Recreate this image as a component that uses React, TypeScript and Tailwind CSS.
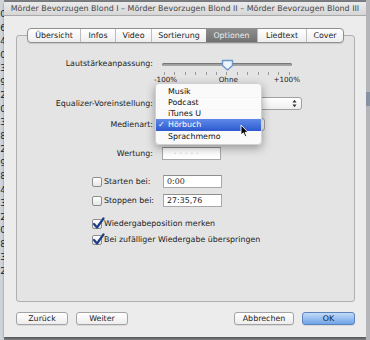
import React from "react";

const TABS = [
  { label: "Übersicht", w: "w-[52px]" },
  { label: "Infos", w: "w-[35px]" },
  { label: "Video", w: "w-[36px]" },
  { label: "Sortierung", w: "w-[55px]" },
  { label: "Optionen", w: "w-[51px]", active: true },
  { label: "Liedtext", w: "w-[49px]" },
  { label: "Cover", w: "w-[37px]" },
];

const MENU = ["Musik", "Podcast", "iTunes U", "Hörbuch", "Sprachmemo"];

const STRIP = ["0", "6", "4", "0", "3", "9", "2", "0", "3", "8", "2", "9", "8", "4", "3", "2", "0", "8", "3", "2"];

function Checkbox({ checked }: { checked?: boolean }) {
  return (
    <div className="relative w-[10px] h-[10px] shrink-0 rounded-[2px] border border-[#8d8d8d] bg-gradient-to-b from-white to-[#e6e6e6]">
      {checked && (
        <svg className="absolute -top-[3px] -left-[1px]" width="13" height="13" viewBox="0 0 13 13">
          <path d="M2 7 L5 10.5 L11.5 1.5" fill="none" stroke="#1d3f86" strokeWidth="2.2" strokeLinecap="round" strokeLinejoin="round" />
        </svg>
      )}
    </div>
  );
}

function Field({ value, children }: { value?: string; children?: React.ReactNode }) {
  return (
    <div className="w-[59px] h-[13px] bg-white border border-[#a8a8a8] border-t-[#8f8f8f] flex items-center pl-[3px] text-[#1a1a1a]">
      {value}
      {children}
    </div>
  );
}

function Button({ label, primary, w }: { label: string; primary?: boolean; w: string }) {
  return (
    <div
      className={`${w} h-[13px] rounded-[3px] border flex items-center justify-center ${
        primary
          ? "border-[#5b84bd] bg-gradient-to-b from-[#c3dbf7] to-[#6fa3e6] text-[#0e1f3a]"
          : "border-[#a3a3a3] bg-gradient-to-b from-white to-[#ededed] text-[#1e1e1e]"
      } shadow-[0_1px_0_rgba(0,0,0,0.08)]`}
    >
      {label}
    </div>
  );
}

export default function App() {
  const ticks = Array.from({ length: 13 });
  return (
    <div className="relative w-[370px] h-[340px] overflow-hidden bg-[#7c7d80] flex font-['DejaVu_Sans',sans-serif] text-[7.9px] leading-none text-[#222]">
      {/* left strip of the window behind */}
      <div className="w-[4px] h-full bg-[#cfd4da] overflow-hidden flex flex-col items-end pt-[10px]">
        {STRIP.map((d, i) => (
          <div key={i} className="h-[13.5px] text-[9px] text-[#1c1c1c] -mr-[2px]">
            {d}
          </div>
        ))}
      </div>

      {/* dialog window */}
      <div className="w-[362px] h-[335px] mt-[2px] bg-[#ececec] flex flex-col shadow-[0_1px_2px_rgba(0,0,0,0.4)]">
        <div className="h-[14px] shrink-0 bg-gradient-to-b from-[#ebebeb] to-[#d6d6d6] border-b border-[#a9a9a9] flex items-center justify-center text-[#474747] text-[7.95px] whitespace-nowrap">
          Mörder Bevorzugen Blond I – Mörder Bevorzugen Blond II – Mörder Bevorzugen Blond III
        </div>

        <div className="flex flex-col pl-[12px] pr-[11px] pt-[12px]">
          {/* tabs */}
          <div className="relative z-10 self-center flex h-[15px] rounded-[4px] border border-[#8f8f8f] bg-gradient-to-b from-white to-[#eeeeee] overflow-hidden shadow-[0_1px_1px_rgba(0,0,0,0.12)]">
            {TABS.map((t, i) => (
              <div
                key={t.label}
                className={`${t.w} flex items-center justify-center ${
                  t.active
                    ? "bg-gradient-to-b from-[#8e8e8e] to-[#727272] text-[#ececec]"
                    : i > 0
                    ? "border-l border-[#bdbdbd] text-[#1f1f1f]"
                    : "text-[#1f1f1f]"
                }`}
              >
                {t.label}
              </div>
            ))}
          </div>

          {/* group box */}
          <div className="-mt-[8px] h-[267px] border border-[#b0b0b0] rounded-[3px] bg-[#e4e4e4] flex flex-col pt-[20px]">
            {/* volume slider */}
            <div className="flex items-start">
              <div className="w-[136px] h-[16px] flex items-center justify-end">Lautstärkeanpassung:</div>
              <div className="ml-[9px] flex flex-col w-[130px]">
                <div className="relative h-[16px] flex items-center">
                  <div className="w-full h-[3px] rounded-full bg-[#a4a4a4] shadow-[inset_0_1px_1px_rgba(0,0,0,0.3)]" />
                  <svg className="absolute left-[59px] top-[3px]" width="13" height="12" viewBox="0 0 13 12">
                    <path d="M1.5 1.5 H11.5 V6.5 L6.5 11 L1.5 6.5 Z" fill="#eef4fb" stroke="#6c97c9" strokeWidth="1.4" strokeLinejoin="round" />
                  </svg>
                </div>
                <div className="h-[3px] flex justify-between px-[2px]">
                  {ticks.map((_, i) => (
                    <div key={i} className="w-px h-[3px] bg-[#9a9a9a]" />
                  ))}
                </div>
                <div className="h-[9px] flex items-center justify-between text-[7.2px] -mx-[8px]">
                  <span>-100%</span>
                  <span className="ml-[6px]">Ohne</span>
                  <span>+100%</span>
                </div>
              </div>
            </div>

            {/* equalizer */}
            <div className="mt-[13px] h-[13px] flex items-center">
              <div className="w-[136px] text-right">Equalizer-Voreinstellung:</div>
              <div className="ml-[6px] w-[143px] h-[13px] rounded-[3px] border border-[#a0a0a0] bg-gradient-to-b from-white to-[#efefef] flex items-center justify-end pr-[4px]">
                <svg width="5" height="9" viewBox="0 0 5 9">
                  <path d="M0.5 3.5 L2.5 0.8 L4.5 3.5 Z M0.5 5.5 L2.5 8.2 L4.5 5.5 Z" fill="#333" />
                </svg>
              </div>
            </div>

            {/* medienart */}
            <div className="mt-[8px] h-[13px] flex items-center">
              <div className="w-[136px] text-right">Medienart:</div>
              <div className="ml-[6px] w-[106px] h-[13px] rounded-[3px] border border-[#a0a0a0] bg-gradient-to-b from-white to-[#efefef]" />
            </div>

            {/* wertung */}
            <div className="mt-[16px] h-[13px] flex items-center">
              <div className="w-[136px] text-right">Wertung:</div>
              <div className="ml-[9px]">
                <Field>
                  <span className="text-[#b5b5b5] tracking-[3px] pl-[8px]">·····</span>
                </Field>
              </div>
            </div>

            {/* start / stop */}
            <div className="mt-[15px] h-[13px] flex items-center pl-[75px]">
              <div className="w-[71px] flex items-center gap-[2px]">
                <Checkbox />
                <span>Starten bei:</span>
              </div>
              <Field value="0:00" />
            </div>
            <div className="mt-[6px] h-[13px] flex items-center pl-[75px]">
              <div className="w-[71px] flex items-center gap-[2px]">
                <Checkbox />
                <span>Stoppen bei:</span>
              </div>
              <Field value="27:35,76" />
            </div>

            {/* options */}
            <div className="mt-[11px] h-[12px] flex items-center gap-[2px] pl-[75px]">
              <Checkbox checked />
              <span>Wiedergabeposition merken</span>
            </div>
            <div className="mt-[4px] h-[12px] flex items-center gap-[2px] pl-[75px]">
              <Checkbox checked />
              <span>Bei zufälliger Wiedergabe überspringen</span>
            </div>
          </div>

          {/* buttons */}
          <div className="mt-[10px] flex items-center">
            <Button label="Zurück" w="w-[52px]" />
            <div className="ml-[8px]">
              <Button label="Weiter" w="w-[52px]" />
            </div>
            <div className="ml-auto flex gap-[8px]">
              <Button label="Abbrechen" w="w-[60px]" />
              <Button label="OK" w="w-[53px]" primary />
            </div>
          </div>
        </div>
      </div>

      {/* right strip */}
      <div className="flex-1 bg-[#b4b5b8] flex flex-col">
        <div className="mt-[92px] h-[14px] w-full bg-[#8793a3]" />
      </div>

      {/* open Medienart menu */}
      <div className="absolute left-[155px] top-[83px] w-[107px] h-[62px] rounded-[4px] bg-[#fbfbfb]/95 shadow-[0_3px_10px_rgba(0,0,0,0.35)] border border-[#d0d0d0] flex flex-col pt-[2px]">
        {MENU.map((m) => {
          const sel = m === "Hörbuch";
          return (
            <div
              key={m}
              className={`flex items-center ${sel ? "h-[12px] bg-gradient-to-b from-[#5f8ae8] to-[#2d58d0] text-white" : "h-[11px] text-[#111]"}`}
            >
              <span className="w-[12px] pl-[2px] text-[8px]">{sel ? "✓" : ""}</span>
              <span>{m}</span>
            </div>
          );
        })}
      </div>

      {/* mouse cursor */}
      <svg className="absolute left-[240px] top-[124px]" width="9" height="14" viewBox="0 0 9 14">
        <path d="M1 1 L1 11 L3.4 8.8 L5 12.6 L6.6 11.9 L5.1 8.3 L8 8.3 Z" fill="#000" stroke="#fff" strokeWidth="0.9" strokeLinejoin="round" />
      </svg>
    </div>
  );
}
